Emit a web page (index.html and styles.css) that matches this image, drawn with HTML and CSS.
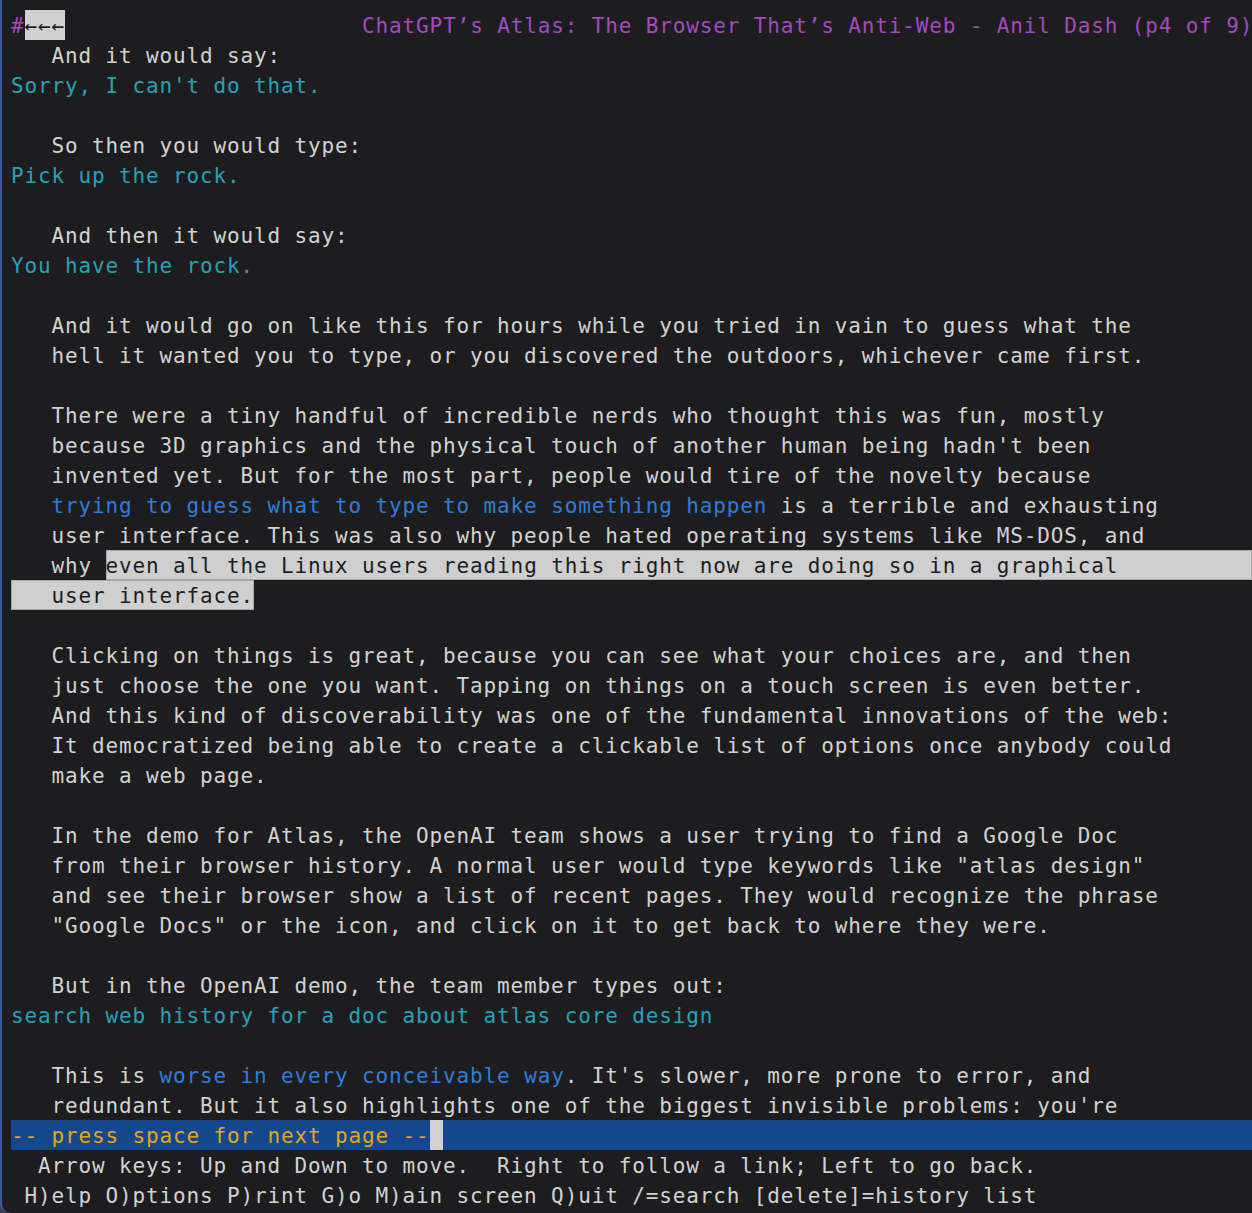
FILE: index.html
```html
<!DOCTYPE html>
<html>
<head>
<meta charset="utf-8">
<title>lynx</title>
<link rel="stylesheet" href="styles.css">
</head>
<body>
<div class="win">
<div class="term">
<div class="row"><span class="mag">#</span><span class="inv">←←←</span>                      <span class="mag">ChatGPT’s Atlas: The Browser That’s Anti-Web - Anil Dash (p4 of 9)</span></div>
<div class="row">   And it would say:</div>
<div class="row cyan">Sorry, I can't do that.</div>
<div class="row"></div>
<div class="row">   So then you would type:</div>
<div class="row cyan">Pick up the rock.</div>
<div class="row"></div>
<div class="row">   And then it would say:</div>
<div class="row cyan">You have the rock.</div>
<div class="row"></div>
<div class="row">   And it would go on like this for hours while you tried in vain to guess what the</div>
<div class="row">   hell it wanted you to type, or you discovered the outdoors, whichever came first.</div>
<div class="row"></div>
<div class="row">   There were a tiny handful of incredible nerds who thought this was fun, mostly</div>
<div class="row">   because 3D graphics and the physical touch of another human being hadn't been</div>
<div class="row">   invented yet. But for the most part, people would tire of the novelty because</div>
<div class="row">   <span class="link">trying to guess what to type to make something happen</span> is a terrible and exhausting</div>
<div class="row">   user interface. This was also why people hated operating systems like MS-DOS, and</div>
<div class="row flexrow"><span>   why </span><span class="sel grow">even all the Linux users reading this right now are doing so in a graphical</span></div>
<div class="row"><span class="sel sel2">   user interface.</span></div>
<div class="row"></div>
<div class="row">   Clicking on things is great, because you can see what your choices are, and then</div>
<div class="row">   just choose the one you want. Tapping on things on a touch screen is even better.</div>
<div class="row">   And this kind of discoverability was one of the fundamental innovations of the web:</div>
<div class="row">   It democratized being able to create a clickable list of options once anybody could</div>
<div class="row">   make a web page.</div>
<div class="row"></div>
<div class="row">   In the demo for Atlas, the OpenAI team shows a user trying to find a Google Doc</div>
<div class="row">   from their browser history. A normal user would type keywords like "atlas design"</div>
<div class="row">   and see their browser show a list of recent pages. They would recognize the phrase</div>
<div class="row">   "Google Docs" or the icon, and click on it to get back to where they were.</div>
<div class="row"></div>
<div class="row">   But in the OpenAI demo, the team member types out:</div>
<div class="row cyan">search web history for a doc about atlas core design</div>
<div class="row"></div>
<div class="row">   This is <span class="link">worse in every conceivable way</span>. It's slower, more prone to error, and</div>
<div class="row">   redundant. But it also highlights one of the biggest invisible problems: you're</div>
<div class="row status">-- press space for next page --<span class="cursor"> </span></div>
<div class="row">  Arrow keys: Up and Down to move.  Right to follow a link; Left to go back.</div>
<div class="row"> H)elp O)ptions P)rint G)o M)ain screen Q)uit /=search [delete]=history list</div>
</div>
</div>
</body>
</html>
```

FILE: styles.css
```css
html, body {
  margin: 0;
  padding: 0;
  background: #3c4048;
  width: 1252px;
  height: 1213px;
  overflow: hidden;
}

.win {
  width: 1250px;
  height: 1213px;
  background: #1d1d1f;
  border-left: 2px solid #3d5c9c;
  border-bottom-left-radius: 10px;
  overflow: hidden;
}

.term {
  padding: 10px 0 0 9px;
  font-family: "DejaVu Sans Mono", "Liberation Mono", monospace;
  font-size: 21px;
  letter-spacing: 0.86px;
  color: #d2d2d2;
}

.row {
  height: 30px;
  line-height: 32px;
  white-space: pre;
}

.flexrow {
  display: flex;
}

.mag { color: #a449bf; }
.cyan { color: #2aa0b6; }
.link { color: #2f7dd6; }

.inv {
  display: inline-block;
  height: 30px;
  vertical-align: top;
  background: #d0d0d0;
  color: #1d1d1f;
}

.sel {
  background: #cfcfcf;
  color: #1d1d1f;
  box-shadow: inset 0 0 0 1px #a8a8a8;
}

.sel2 {
  display: inline-block;
  height: 30px;
  vertical-align: top;
}

.grow {
  flex: 1;
}

.status {
  background: #15478c;
  color: #e3a51d;
}

.cursor {
  display: inline-block;
  height: 30px;
  vertical-align: top;
  background: #d2d2d2;
}
```
